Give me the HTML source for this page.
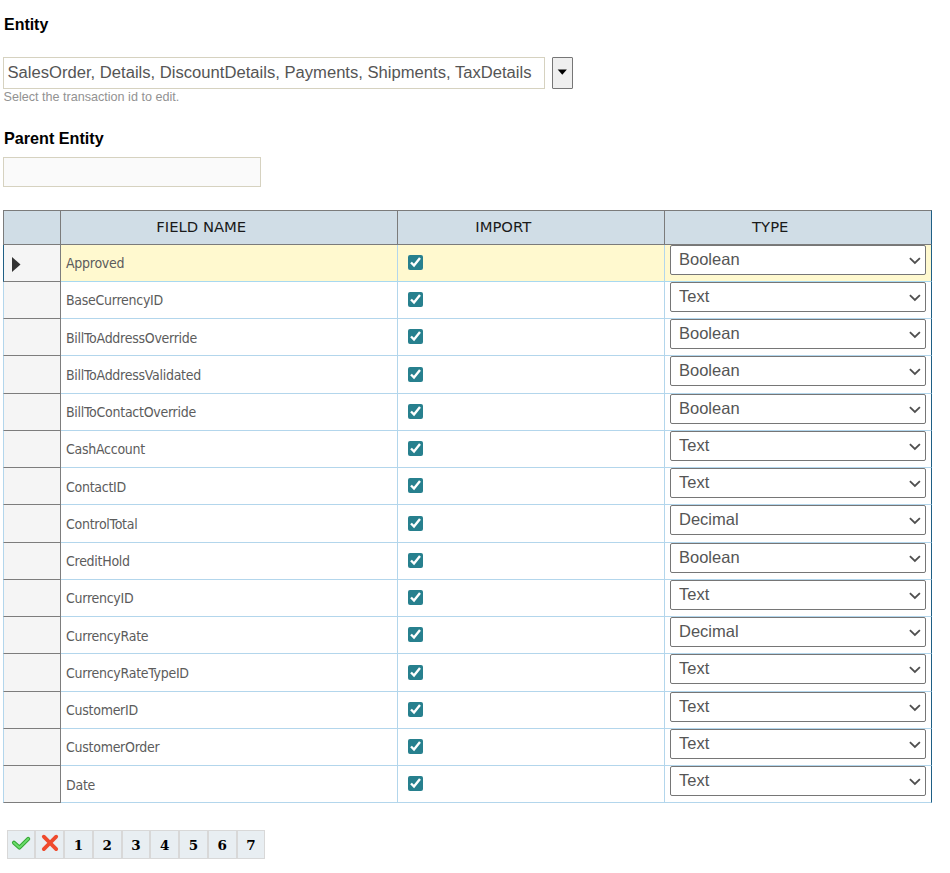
<!DOCTYPE html>
<html lang="en"><head><meta charset="utf-8"><title>Entity</title>
<style>
html,body{margin:0;padding:0;background:#fff;}
body{width:950px;height:873px;position:relative;overflow:hidden;font-family:"Liberation Sans",sans-serif;color:#555;}
.abs{position:absolute;}
h3{position:absolute;margin:0;font-weight:bold;font-size:17px;line-height:20px;color:#000;white-space:nowrap;transform-origin:0 50%;}
.inp{position:absolute;box-sizing:border-box;border:1px solid #d6d2c0;background:#fff;font-size:16.63px;color:#555;white-space:nowrap;}
.hint{position:absolute;font-size:12.6px;color:#929292;white-space:nowrap;}
.ddbtn{position:absolute;box-sizing:border-box;border:1px solid #767676;background:#efefef;border-radius:1px;}
.ddbtn svg{position:absolute;left:4px;top:11px;}
.grid{position:absolute;left:0;top:0;}
.hd{position:absolute;box-sizing:border-box;background:#d0dde6;border:1px solid #7b7b7b;top:210px;height:35px;text-align:center;font-family:"DejaVu Sans",sans-serif;font-size:14.8px;line-height:32px;color:#1a1a1a;padding-right:55.5px;}
.rh{position:absolute;left:3px;width:58px;box-sizing:border-box;background:#f5f5f5;border:1px solid #7d7d7d;border-top:none;}
.c{position:absolute;box-sizing:border-box;border:1px solid #b3d6ec;border-top:none;border-left:none;}
.fn{font-family:"DejaVu Sans Condensed","DejaVu Sans",sans-serif;font-size:14px;letter-spacing:-0.27px;color:#5c5c5c;padding-left:5px;white-space:nowrap;}
.sel{background:#fff9cf;border-bottom-color:#a8d9f0;}
select{position:absolute;left:5px;top:0;width:256px;height:30px;box-sizing:border-box;font-family:"Liberation Sans",sans-serif;font-size:16.5px;color:#555;background:#fff;border:1px solid #767676;border-radius:2px;padding:0 0 3px 8px;margin:0;-webkit-appearance:none;appearance:none;}
.chev{position:absolute;left:243px;top:11px;}
input[type=checkbox]{position:absolute;left:10px;margin:0;width:15px;height:15px;accent-color:#27808e;}
.pg{position:absolute;top:830px;height:29px;width:28.7px;box-sizing:border-box;background:#e8eef2;border:1px solid #d8d8d8;text-align:center;font-family:"DejaVu Serif","Liberation Serif",serif;font-weight:bold;font-size:13.5px;line-height:28px;color:#000;}
</style></head><body>
<h3 style="left:3.6px;top:15px;transform:scaleX(0.938);">Entity</h3>
<div class="inp" style="left:3px;top:57px;width:542px;height:32px;line-height:29px;padding-left:3.5px;">SalesOrder, Details, DiscountDetails, Payments, Shipments, TaxDetails</div>
<div class="ddbtn" style="left:552px;top:57px;width:21px;height:32px;"><svg width="11" height="7" viewBox="0 0 11 7"><path d="M0.7 0.6 L9.9 0.6 L5.3 5.8Z" fill="#000"/></svg></div>
<div class="hint" style="left:3.5px;top:89.5px;">Select the transaction id to edit.</div>
<h3 style="left:3.8px;top:129px;transform:scaleX(0.951);">Parent Entity</h3>
<div class="inp" style="left:3px;top:157px;width:258px;height:30px;background:#fafafa;"></div>

<div class="hd" style="left:3px;width:58px;"></div>
<div class="hd" style="left:60px;width:338px;">FIELD NAME</div>
<div class="hd" style="left:397px;width:268px;">IMPORT</div>
<div class="hd" style="left:664px;width:268px;border-right-color:#1f5f85;">TYPE</div>
<div class="rh" style="top:245px;height:37px;border-left-color:#1f5f85;"><svg class="abs" style="left:8px;top:12px" width="9" height="15" viewBox="0 0 9 15"><path d="M0 0 L8.5 7.5 L0 15Z" fill="#333"/></svg></div>
<div class="c fn sel" style="left:61px;top:245px;width:337px;height:37px;line-height:38px;"><span style="position:relative;top:-1px">Approved</span></div>
<div class="c sel" style="left:398px;top:245px;width:267px;height:37px;"><input type="checkbox" checked style="top:10px"></div>
<div class="c sel" style="left:665px;top:245px;width:267px;height:37px;border-right-color:#1f5f85;"><select><option>Text</option><option selected>Boolean</option><option>Decimal</option></select><svg class="chev" width="14" height="10" viewBox="0 0 14 10"><path d="M1.9 2.2 L6.9 7.0 L11.9 2.2" fill="none" stroke="#4f4f4f" stroke-width="1.8"/></svg></div>
<div class="rh" style="top:282px;height:37px;border-left-color:#b3d6ec;"></div>
<div class="c fn" style="left:61px;top:282px;width:337px;height:37px;line-height:38px;"><span style="position:relative;top:-1px">BaseCurrencyID</span></div>
<div class="c" style="left:398px;top:282px;width:267px;height:37px;"><input type="checkbox" checked style="top:10px"></div>
<div class="c" style="left:665px;top:282px;width:267px;height:37px;border-right-color:#1f5f85;"><select><option selected>Text</option><option>Boolean</option><option>Decimal</option></select><svg class="chev" width="14" height="10" viewBox="0 0 14 10"><path d="M1.9 2.2 L6.9 7.0 L11.9 2.2" fill="none" stroke="#4f4f4f" stroke-width="1.8"/></svg></div>
<div class="rh" style="top:319px;height:37px;border-left-color:#b3d6ec;"></div>
<div class="c fn" style="left:61px;top:319px;width:337px;height:37px;line-height:38px;"><span style="position:relative;top:0px">BillToAddressOverride</span></div>
<div class="c" style="left:398px;top:319px;width:267px;height:37px;"><input type="checkbox" checked style="top:10px"></div>
<div class="c" style="left:665px;top:319px;width:267px;height:37px;border-right-color:#1f5f85;"><select><option>Text</option><option selected>Boolean</option><option>Decimal</option></select><svg class="chev" width="14" height="10" viewBox="0 0 14 10"><path d="M1.9 2.2 L6.9 7.0 L11.9 2.2" fill="none" stroke="#4f4f4f" stroke-width="1.8"/></svg></div>
<div class="rh" style="top:356px;height:38px;border-left-color:#b3d6ec;"></div>
<div class="c fn" style="left:61px;top:356px;width:337px;height:38px;line-height:38px;"><span style="position:relative;top:0px">BillToAddressValidated</span></div>
<div class="c" style="left:398px;top:356px;width:267px;height:38px;"><input type="checkbox" checked style="top:11px"></div>
<div class="c" style="left:665px;top:356px;width:267px;height:38px;border-right-color:#1f5f85;"><select><option>Text</option><option selected>Boolean</option><option>Decimal</option></select><svg class="chev" width="14" height="10" viewBox="0 0 14 10"><path d="M1.9 2.2 L6.9 7.0 L11.9 2.2" fill="none" stroke="#4f4f4f" stroke-width="1.8"/></svg></div>
<div class="rh" style="top:394px;height:37px;border-left-color:#b3d6ec;"></div>
<div class="c fn" style="left:61px;top:394px;width:337px;height:37px;line-height:38px;"><span style="position:relative;top:-1px">BillToContactOverride</span></div>
<div class="c" style="left:398px;top:394px;width:267px;height:37px;"><input type="checkbox" checked style="top:10px"></div>
<div class="c" style="left:665px;top:394px;width:267px;height:37px;border-right-color:#1f5f85;"><select><option>Text</option><option selected>Boolean</option><option>Decimal</option></select><svg class="chev" width="14" height="10" viewBox="0 0 14 10"><path d="M1.9 2.2 L6.9 7.0 L11.9 2.2" fill="none" stroke="#4f4f4f" stroke-width="1.8"/></svg></div>
<div class="rh" style="top:431px;height:37px;border-left-color:#b3d6ec;"></div>
<div class="c fn" style="left:61px;top:431px;width:337px;height:37px;line-height:38px;"><span style="position:relative;top:-1px">CashAccount</span></div>
<div class="c" style="left:398px;top:431px;width:267px;height:37px;"><input type="checkbox" checked style="top:10px"></div>
<div class="c" style="left:665px;top:431px;width:267px;height:37px;border-right-color:#1f5f85;"><select><option selected>Text</option><option>Boolean</option><option>Decimal</option></select><svg class="chev" width="14" height="10" viewBox="0 0 14 10"><path d="M1.9 2.2 L6.9 7.0 L11.9 2.2" fill="none" stroke="#4f4f4f" stroke-width="1.8"/></svg></div>
<div class="rh" style="top:468px;height:37px;border-left-color:#b3d6ec;"></div>
<div class="c fn" style="left:61px;top:468px;width:337px;height:37px;line-height:38px;"><span style="position:relative;top:0px">ContactID</span></div>
<div class="c" style="left:398px;top:468px;width:267px;height:37px;"><input type="checkbox" checked style="top:10px"></div>
<div class="c" style="left:665px;top:468px;width:267px;height:37px;border-right-color:#1f5f85;"><select><option selected>Text</option><option>Boolean</option><option>Decimal</option></select><svg class="chev" width="14" height="10" viewBox="0 0 14 10"><path d="M1.9 2.2 L6.9 7.0 L11.9 2.2" fill="none" stroke="#4f4f4f" stroke-width="1.8"/></svg></div>
<div class="rh" style="top:505px;height:38px;border-left-color:#b3d6ec;"></div>
<div class="c fn" style="left:61px;top:505px;width:337px;height:38px;line-height:38px;"><span style="position:relative;top:0px">ControlTotal</span></div>
<div class="c" style="left:398px;top:505px;width:267px;height:38px;"><input type="checkbox" checked style="top:11px"></div>
<div class="c" style="left:665px;top:505px;width:267px;height:38px;border-right-color:#1f5f85;"><select><option>Text</option><option>Boolean</option><option selected>Decimal</option></select><svg class="chev" width="14" height="10" viewBox="0 0 14 10"><path d="M1.9 2.2 L6.9 7.0 L11.9 2.2" fill="none" stroke="#4f4f4f" stroke-width="1.8"/></svg></div>
<div class="rh" style="top:543px;height:37px;border-left-color:#b3d6ec;"></div>
<div class="c fn" style="left:61px;top:543px;width:337px;height:37px;line-height:38px;"><span style="position:relative;top:-1px">CreditHold</span></div>
<div class="c" style="left:398px;top:543px;width:267px;height:37px;"><input type="checkbox" checked style="top:10px"></div>
<div class="c" style="left:665px;top:543px;width:267px;height:37px;border-right-color:#1f5f85;"><select><option>Text</option><option selected>Boolean</option><option>Decimal</option></select><svg class="chev" width="14" height="10" viewBox="0 0 14 10"><path d="M1.9 2.2 L6.9 7.0 L11.9 2.2" fill="none" stroke="#4f4f4f" stroke-width="1.8"/></svg></div>
<div class="rh" style="top:580px;height:37px;border-left-color:#b3d6ec;"></div>
<div class="c fn" style="left:61px;top:580px;width:337px;height:37px;line-height:38px;"><span style="position:relative;top:-1px">CurrencyID</span></div>
<div class="c" style="left:398px;top:580px;width:267px;height:37px;"><input type="checkbox" checked style="top:10px"></div>
<div class="c" style="left:665px;top:580px;width:267px;height:37px;border-right-color:#1f5f85;"><select><option selected>Text</option><option>Boolean</option><option>Decimal</option></select><svg class="chev" width="14" height="10" viewBox="0 0 14 10"><path d="M1.9 2.2 L6.9 7.0 L11.9 2.2" fill="none" stroke="#4f4f4f" stroke-width="1.8"/></svg></div>
<div class="rh" style="top:617px;height:37px;border-left-color:#b3d6ec;"></div>
<div class="c fn" style="left:61px;top:617px;width:337px;height:37px;line-height:38px;"><span style="position:relative;top:0px">CurrencyRate</span></div>
<div class="c" style="left:398px;top:617px;width:267px;height:37px;"><input type="checkbox" checked style="top:10px"></div>
<div class="c" style="left:665px;top:617px;width:267px;height:37px;border-right-color:#1f5f85;"><select><option>Text</option><option>Boolean</option><option selected>Decimal</option></select><svg class="chev" width="14" height="10" viewBox="0 0 14 10"><path d="M1.9 2.2 L6.9 7.0 L11.9 2.2" fill="none" stroke="#4f4f4f" stroke-width="1.8"/></svg></div>
<div class="rh" style="top:654px;height:38px;border-left-color:#b3d6ec;"></div>
<div class="c fn" style="left:61px;top:654px;width:337px;height:38px;line-height:38px;"><span style="position:relative;top:0px">CurrencyRateTypeID</span></div>
<div class="c" style="left:398px;top:654px;width:267px;height:38px;"><input type="checkbox" checked style="top:11px"></div>
<div class="c" style="left:665px;top:654px;width:267px;height:38px;border-right-color:#1f5f85;"><select><option selected>Text</option><option>Boolean</option><option>Decimal</option></select><svg class="chev" width="14" height="10" viewBox="0 0 14 10"><path d="M1.9 2.2 L6.9 7.0 L11.9 2.2" fill="none" stroke="#4f4f4f" stroke-width="1.8"/></svg></div>
<div class="rh" style="top:692px;height:37px;border-left-color:#b3d6ec;"></div>
<div class="c fn" style="left:61px;top:692px;width:337px;height:37px;line-height:38px;"><span style="position:relative;top:-1px">CustomerID</span></div>
<div class="c" style="left:398px;top:692px;width:267px;height:37px;"><input type="checkbox" checked style="top:10px"></div>
<div class="c" style="left:665px;top:692px;width:267px;height:37px;border-right-color:#1f5f85;"><select><option selected>Text</option><option>Boolean</option><option>Decimal</option></select><svg class="chev" width="14" height="10" viewBox="0 0 14 10"><path d="M1.9 2.2 L6.9 7.0 L11.9 2.2" fill="none" stroke="#4f4f4f" stroke-width="1.8"/></svg></div>
<div class="rh" style="top:729px;height:37px;border-left-color:#b3d6ec;"></div>
<div class="c fn" style="left:61px;top:729px;width:337px;height:37px;line-height:38px;"><span style="position:relative;top:-1px">CustomerOrder</span></div>
<div class="c" style="left:398px;top:729px;width:267px;height:37px;"><input type="checkbox" checked style="top:10px"></div>
<div class="c" style="left:665px;top:729px;width:267px;height:37px;border-right-color:#1f5f85;"><select><option selected>Text</option><option>Boolean</option><option>Decimal</option></select><svg class="chev" width="14" height="10" viewBox="0 0 14 10"><path d="M1.9 2.2 L6.9 7.0 L11.9 2.2" fill="none" stroke="#4f4f4f" stroke-width="1.8"/></svg></div>
<div class="rh" style="top:766px;height:37px;border-left-color:#b3d6ec;"></div>
<div class="c fn" style="left:61px;top:766px;width:337px;height:37px;line-height:38px;"><span style="position:relative;top:0px">Date</span></div>
<div class="c" style="left:398px;top:766px;width:267px;height:37px;"><input type="checkbox" checked style="top:10px"></div>
<div class="c" style="left:665px;top:766px;width:267px;height:37px;border-right-color:#1f5f85;"><select><option selected>Text</option><option>Boolean</option><option>Decimal</option></select><svg class="chev" width="14" height="10" viewBox="0 0 14 10"><path d="M1.9 2.2 L6.9 7.0 L11.9 2.2" fill="none" stroke="#4f4f4f" stroke-width="1.8"/></svg></div>
<div class="pg" style="left:6.60px;"></div>
<div class="pg" style="left:35.36px;"></div>
<div class="pg" style="left:64.12px;">1</div>
<div class="pg" style="left:92.88px;">2</div>
<div class="pg" style="left:121.64px;">3</div>
<div class="pg" style="left:150.40px;">4</div>
<div class="pg" style="left:179.16px;">5</div>
<div class="pg" style="left:207.92px;">6</div>
<div class="pg" style="left:236.68px;">7</div>
<svg class="abs" style="left:0;top:822px" width="80" height="44" viewBox="0 822 80 44"><path d="M14 842.7 L19.4 847.6 L28.2 838.9" fill="none" stroke="#34a834" stroke-width="4.1" stroke-linecap="round" stroke-linejoin="round"/><path d="M14 842.7 L19.4 847.6 L28.2 838.9" fill="none" stroke="#6bdc6b" stroke-width="2" stroke-linecap="round" stroke-linejoin="round"/><path d="M43.8 836.7 L56.2 849.1 M56.2 836.7 L43.8 849.1" fill="none" stroke="#ef4a2d" stroke-width="3.8" stroke-linecap="round"/></svg>
</body></html>
